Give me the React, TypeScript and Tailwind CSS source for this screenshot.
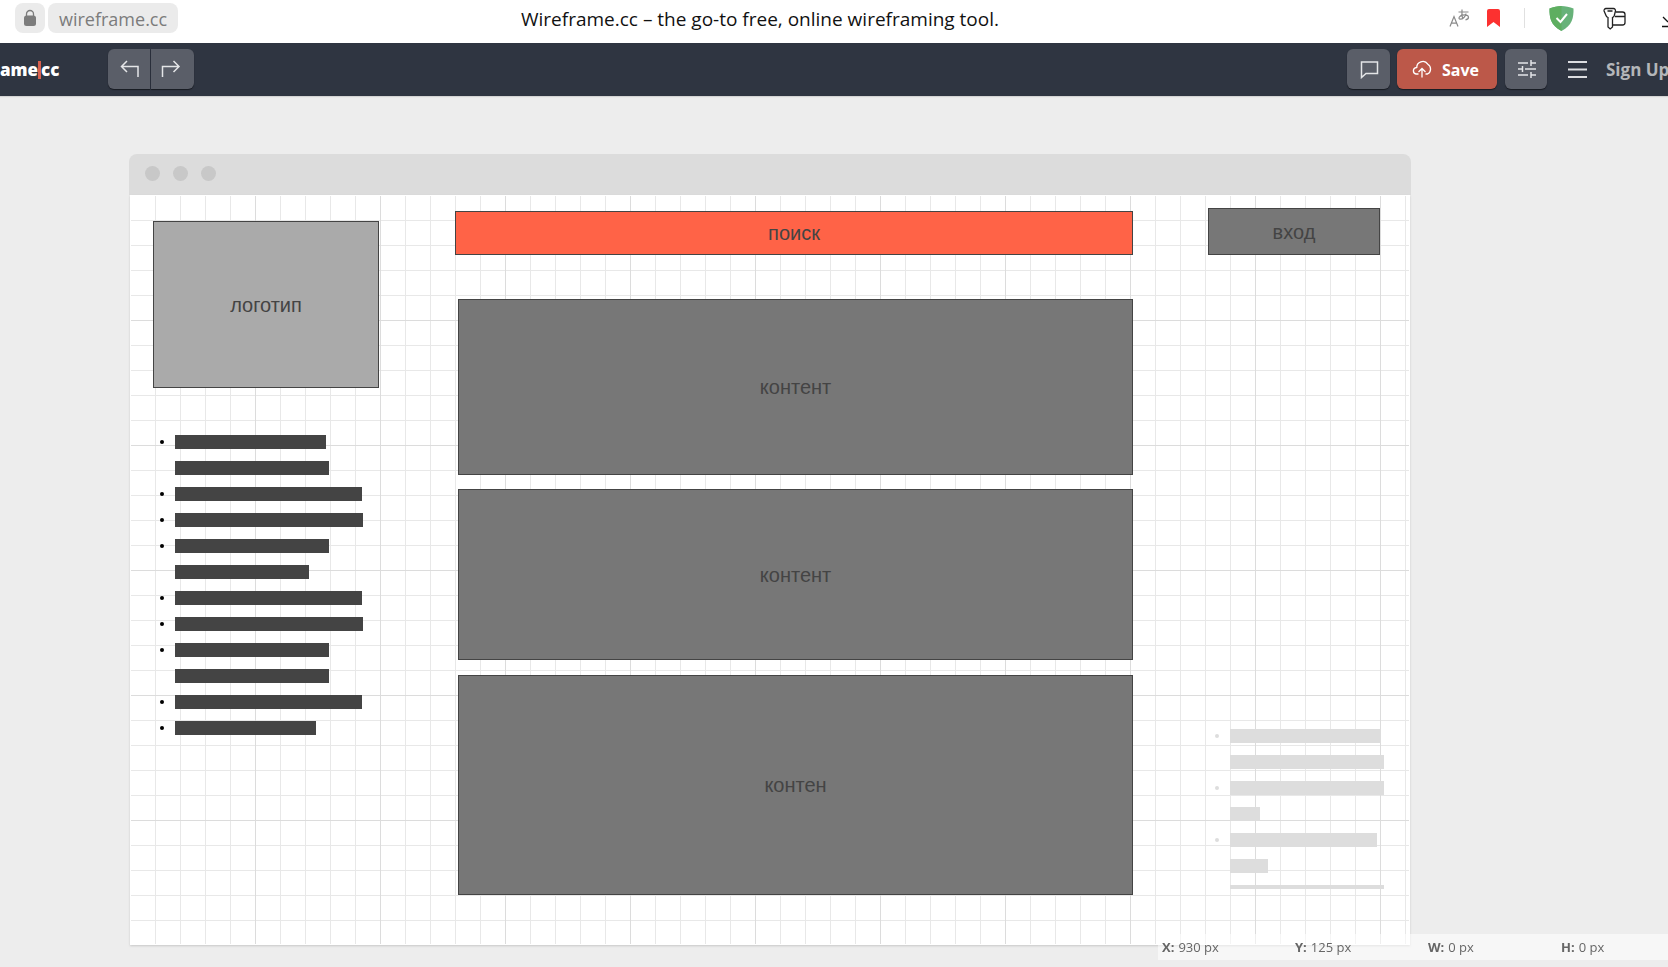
import type { ReactNode } from "react";

type BoxProps = { className: string; children: ReactNode };

function Box({ className, children }: BoxProps) {
  return (
    <div
      className={`absolute flex items-center justify-center border border-[#444] text-xl text-[#444] ${className}`}
    >
      {children}
    </div>
  );
}

type Line = { width: number; bullet: boolean };

const menuLines: Line[] = [
  { width: 151, bullet: true },
  { width: 154, bullet: false },
  { width: 187, bullet: true },
  { width: 188, bullet: true },
  { width: 154, bullet: true },
  { width: 134, bullet: false },
  { width: 187, bullet: true },
  { width: 188, bullet: true },
  { width: 154, bullet: true },
  { width: 154, bullet: false },
  { width: 187, bullet: true },
  { width: 141, bullet: true },
];

const footerLines: Line[] = [
  { width: 151, bullet: true },
  { width: 154, bullet: false },
  { width: 154, bullet: true },
  { width: 30, bullet: false },
  { width: 147, bullet: true },
  { width: 38, bullet: false },
  { width: 154, bullet: false },
];

type LinesProps = { lines: Line[]; className: string; bar: string; dot: string };

function Lines({ lines, className, bar, dot }: LinesProps) {
  return (
    <ul className={`absolute flex flex-col gap-3 overflow-hidden ${className}`}>
      {lines.map((line, i) => (
        <li key={i} className="flex h-3.5 shrink-0 items-center gap-[11px]">
          <span className={`size-1 rounded-full ${line.bullet ? dot : ""}`} />
          <span className={`h-3.5 ${bar}`} style={{ width: line.width }} />
        </li>
      ))}
    </ul>
  );
}

function AddressBar() {
  return (
    <header className="flex h-[43px] shrink-0 items-center bg-white pl-[15px]">
      <div className="flex w-[506px] shrink-0 items-center gap-[3px] pb-[7px]">
        <button
          type="button"
          aria-label="Site security"
          className="flex h-[30px] w-[30px] items-center justify-center rounded-lg bg-[#ebebeb]"
        >
          <svg width="14" height="18" viewBox="0 0 14 18">
            <path d="M3.5 8V5a3.5 3.5 0 0 1 7 0v3" fill="none" stroke="#7c7c7c" strokeWidth="1.3" />
            <rect x="1" y="6.5" width="12" height="10.5" rx="2.5" fill="#7c7c7c" />
          </svg>
        </button>
        <a
          href="#address"
          className="flex h-[30px] items-center rounded-lg bg-[#ebebeb] px-[11px] pt-0.5 text-[18px] text-[#7c7c7c]"
        >
          wireframe.cc
        </a>
      </div>
      <h1 className="pb-1 text-[19px] whitespace-nowrap text-[#111]">
        Wireframe.cc – the go-to free, online wireframing tool.
      </h1>
      <div className="flex flex-1 items-center justify-end overflow-hidden pb-[7px]">
        <button type="button" aria-label="Translate page" className="mr-[17px]">
          <svg width="21" height="20" viewBox="0 0 21 20" fill="none" stroke="#8a8a8a" strokeWidth="1.2">
            <path d="M1 18.500L5 8.500L9 18.500M2.400 15.200H7.600" />
            <path d="M9.500 4H19.500M13 1.500C12.700 5 12.800 8 13.800 11M17 5.500C16.500 8.500 14 11.200 11.200 11.200C8.800 11.200 10 6.800 15.500 6.800C20.500 6.800 20.800 11 16.500 11.800" />
          </svg>
        </button>
        <button type="button" aria-label="Bookmark" className="mr-6">
          <svg width="13" height="18" viewBox="0 0 13 18">
            <path d="M2 0h9a2 2 0 0 1 2 2v16l-6.500-5L0 18V2a2 2 0 0 1 2-2z" fill="#fc3130" />
          </svg>
        </button>
        <span className="mr-6 h-5 w-px bg-[#e0e0e0]" />
        <button type="button" aria-label="Protection" className="mr-[29px]">
          <svg width="25" height="25" viewBox="0 0 25 25">
            <path d="M12.500 0C16 0 21 1 24.500 2.500C24.700 11 23.500 19.500 12.500 25C1.500 19.500.300 11 .500 2.500C4 1 9 0 12.500 0z" fill="#67b279" />
            <path d="M12.500 0C9 0 4 1 .500 2.500C.300 11 1.500 19.500 12.500 25z" fill="#5eae60" />
            <path d="M7.500 12l4 4l6.500-8" fill="none" stroke="#fff" strokeWidth="2" />
          </svg>
        </button>
        <button type="button" aria-label="Passwords" className="mr-9">
          <svg width="23" height="23" viewBox="0 0 23 23" fill="none" stroke="#222" strokeWidth="1.300">
            <path d="M3 1.500h7.500a2 2 0 0 1 1.900 2.600L11.300 8.500a3 3 0 0 1-1.800 2V20l-2.300 2L5 20v-9.500a3 3 0 0 1-2-2L1.100 4A2 2 0 0 1 3 1.500zM4.500 4h5" />
            <path d="M12.500 5h7a2.500 2.500 0 0 1 2.500 2.500v8a2.500 2.500 0 0 1-2.500 2.500H10M12 9.500h10" />
          </svg>
        </button>
        <button type="button" aria-label="Downloads">
          <svg width="6" height="20" viewBox="0 0 6 20" fill="none" stroke="#111" strokeWidth="1.300">
            <path d="M1 9l5 5M0 18.500h6" />
          </svg>
        </button>
      </div>
    </header>
  );
}

const toolButton =
  "flex h-10 items-center justify-center bg-[#5a5e68] text-[#e4e5e7] shadow-[0_1px_1px_#181b22]";

function Toolbar() {
  return (
    <nav className="flex h-[53px] shrink-0 items-center overflow-hidden bg-[#2f3541] pb-px shadow-[0_1px_1px_#d4d4d4]">
      <a href="#home" className="flex w-[108px] items-center pt-0.5 text-[17px] font-extrabold text-white">
        ame
        <span className="h-[18px] w-[3px] bg-[#d9604e]" />
        cc
      </a>
      <div className="flex gap-px">
        <button type="button" aria-label="Undo" className={`${toolButton} w-[42px] rounded-l-md`}>
          <svg width="20" height="18" viewBox="0 0 20 18" fill="none" stroke="currentColor" strokeWidth="1.500">
            <path d="M8 1L2.500 6.500L8 12M2.500 6.500H19V17" />
          </svg>
        </button>
        <button type="button" aria-label="Redo" className={`${toolButton} w-[43px] rounded-r-md pr-1`}>
          <svg width="20" height="18" viewBox="0 0 20 18" fill="none" stroke="currentColor" strokeWidth="1.500">
            <path d="M12.500 1L18 6.500L12.500 12M18 6.500H1.500V17" />
          </svg>
        </button>
      </div>
      <div className="ml-auto flex items-center">
        <button type="button" aria-label="Comments" className={`${toolButton} mr-[7px] w-[43px] rounded-md pl-0.5`}>
          <svg width="19" height="19" viewBox="0 0 19 19" fill="none" stroke="currentColor" strokeWidth="1.500">
            <path d="M1.500 2H17.500V13.500H6L1.500 17.500z" />
          </svg>
        </button>
        <button
          type="button"
          className="mr-2 flex h-10 w-[100px] items-center gap-2.5 rounded-md bg-[#bc5849] pl-[15px] text-base font-bold text-white shadow-[0_1px_1px_#181b22]"
        >
          <svg width="20" height="18" viewBox="0 0 20 18" fill="none" stroke="currentColor" strokeWidth="1.300">
            <path d="M6.500 14H4A3.300 3.300 0 0 1 3.800 7.600H5M4.800 8A6 6 0 0 1 15.800 4.200A5.600 5.600 0 0 1 15.500 14H13.500M10 17.500V8.500M6.500 12L10 8.500L13.500 12" />
          </svg>
          <span className="pt-0.5">Save</span>
        </button>
        <button type="button" aria-label="Settings" className={`${toolButton} mr-[21px] w-[42px] rounded-md pl-0.5`}>
          <svg width="18" height="20" viewBox="0 0 18 20" fill="none" stroke="currentColor" strokeWidth="1.500">
            <path d="M0 4H10M13 4H18M13 1V7M0 10H4M7 10H18M4.500 7V13M0 16H10M13 16H18M13 13V19" />
          </svg>
        </button>
        <button type="button" aria-label="Menu" className="mr-[19px]">
          <svg width="19" height="17" viewBox="0 0 19 17" stroke="#dcdde0" strokeWidth="2">
            <path d="M0 1H19M0 8.500H19M0 16H19" />
          </svg>
        </button>
        <a
          href="#signup"
          className="w-[62px] overflow-hidden pt-0.5 text-[17px] font-bold whitespace-nowrap text-[#b4b6b9]"
        >
          Sign Up
        </a>
      </div>
    </nav>
  );
}

function Canvas() {
  return (
    <section className="mt-[58px] mr-[257px] ml-[129px]">
      <div className="flex h-[41px] items-center gap-[13px] rounded-t-lg bg-[#dcdcdc] px-4 pb-0.5">
        <span className="size-[15px] rounded-full bg-[#c8c8c8]" />
        <span className="size-[15px] rounded-full bg-[#c8c8c8]" />
        <span className="size-[15px] rounded-full bg-[#c8c8c8]" />
      </div>
      <div className="relative mx-px h-[750px] bg-white font-['Liberation_Sans',sans-serif] shadow-[0_1px_2px_#c8c8c8]">
        <div className="h-full p-px">
          <div className="h-full bg-[linear-gradient(to_left,#dcdcdc_1px,transparent_1px),linear-gradient(to_top,#dcdcdc_1px,transparent_1px),linear-gradient(to_left,#e8e8e8_1px,transparent_1px),linear-gradient(to_top,#e8e8e8_1px,transparent_1px)] bg-[size:125px_125px,125px_125px,25px_25px,25px_25px]" />
        </div>
        <Box className="top-[26px] left-[23px] h-[167px] w-[226px] bg-[#aaa]">логотип</Box>
        <Box className="top-4 left-[325px] h-11 w-[678px] bg-[#ff6347]">поиск</Box>
        <Box className="top-[13px] left-[1078px] h-[47px] w-[172px] bg-[#777]">вход</Box>
        <Box className="top-[104px] left-[328px] h-44 w-[675px] bg-[#777]">контент</Box>
        <Box className="top-[294px] left-[328px] h-[171px] w-[675px] bg-[#777]">контент</Box>
        <Box className="top-[480px] left-[328px] h-[220px] w-[675px] bg-[#777]">контен</Box>
        <Lines lines={menuLines} className="top-60 left-[30px]" bar="bg-[#444]" dot="bg-black" />
        <Lines
          lines={footerLines}
          className="top-[534px] left-[1085px] h-40"
          bar="bg-[#ddd]"
          dot="bg-[#ddd]"
        />
      </div>
    </section>
  );
}

const stats = [
  { label: "X:", value: "930 px" },
  { label: "Y:", value: "125 px" },
  { label: "W:", value: "0 px" },
  { label: "H:", value: "0 px" },
];

function StatusBar() {
  return (
    <footer className="fixed right-0 bottom-[7px] h-[26px] w-[510px] overflow-hidden bg-white/55">
      <dl className="flex h-full items-center pt-0.5 pl-1 text-[13px] text-[#666]">
        {stats.map((s) => (
          <div key={s.label} className="flex w-[133px] shrink-0 gap-1">
            <dt className="font-bold">{s.label}</dt>
            <dd>{s.value}</dd>
          </div>
        ))}
      </dl>
    </footer>
  );
}

export default function App() {
  return (
    <div className="flex min-h-screen flex-col overflow-hidden bg-[#ededed] font-['Open_Sans','Noto_Sans',sans-serif]">
      <AddressBar />
      <Toolbar />
      <main>
        <Canvas />
      </main>
      <StatusBar />
    </div>
  );
}
